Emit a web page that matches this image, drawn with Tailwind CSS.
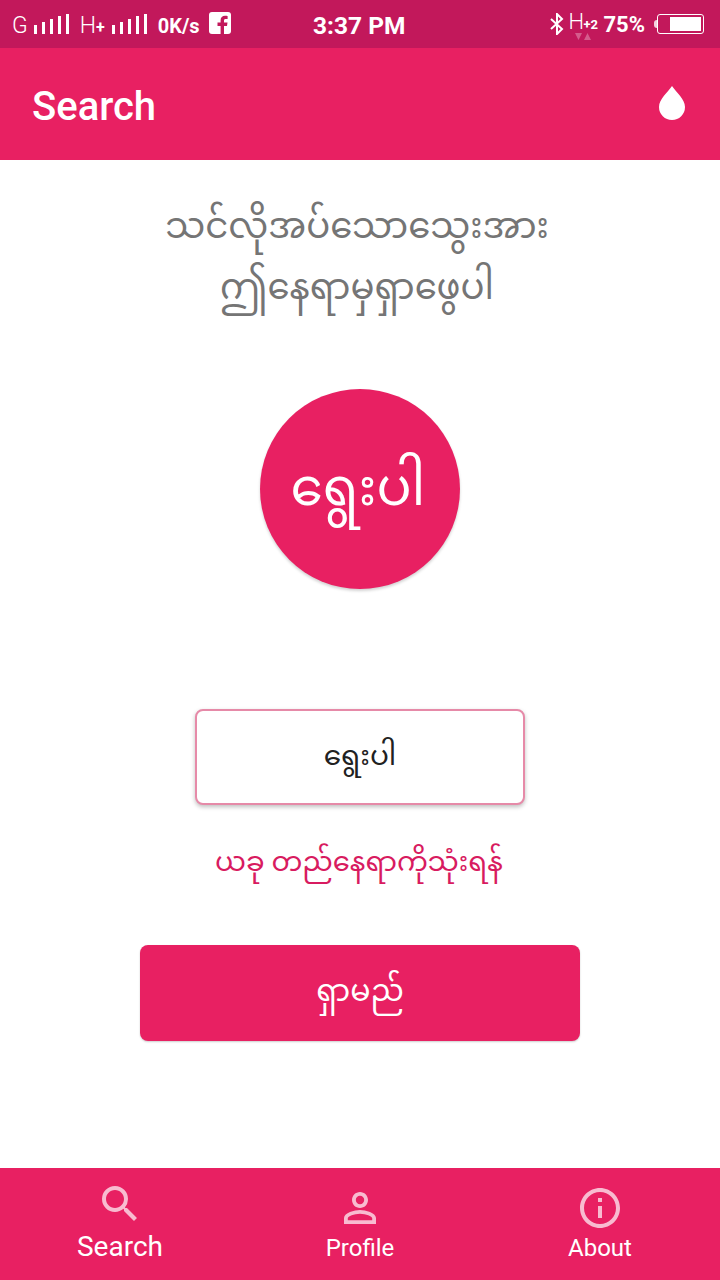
<!DOCTYPE html>
<html lang="my">
<head>
    <meta charset="UTF-8">
    <meta name="viewport" content="width=device-width, initial-scale=1.0">
    <title>Search</title>
    <script src="https://cdn.jsdelivr.net/npm/@tailwindcss/browser@4"></script>
</head>
<body class="w-[720px] h-[1280px] overflow-hidden bg-white flex flex-col font-['Roboto','Noto_Sans_Myanmar','Padauk','Noto_Sans',sans-serif]">
    <!-- Status bar -->
    <div class="h-[48px] shrink-0 bg-[#c2185b] text-white flex items-center relative">
        <div class="flex items-center pl-[12px] gap-[5px]">
            <span class="text-[23px] font-light leading-none mt-[3px]">G</span>
            <svg width="38" height="24" viewBox="0 0 38 24" fill="white"><rect x="1" y="13" width="3" height="9"/><rect x="9" y="10" width="3" height="12"/><rect x="17" y="7" width="3" height="15"/><rect x="25" y="4" width="3" height="18"/><rect x="33" y="2" width="3" height="20"/></svg>
            <span class="text-[23px] font-light leading-none ml-[4px] mt-[3px]">H<span class="text-[16px] font-bold">+</span></span>
            <svg class="ml-[1px]" width="38" height="24" viewBox="0 0 38 24" fill="white"><rect x="1" y="13" width="3" height="9"/><rect x="9" y="10" width="3" height="12"/><rect x="17" y="7" width="3" height="15"/><rect x="25" y="4" width="3" height="18"/><rect x="33" y="2" width="3" height="20"/></svg>
            <span class="text-[20px] font-bold leading-none ml-[4px] mt-[3px]">0K/s</span>
            <svg class="ml-[4px] -mt-[3px]" width="22" height="22" viewBox="0 0 22 22"><rect width="22" height="22" rx="3" fill="white"/><path d="M15 22v-8h3l.5-3.4H15V8.6c0-1 .4-1.7 1.8-1.7h1.8V3.900c-.4 0-1.400-.2-2.600-.2-2.600 0-4.400 1.600-4.400 4.500v2.400H8.500V14h3.100v8z" fill="#c2185b"/></svg>
        </div>
        <span class="absolute left-[313px] top-[11px] text-[24.500px] leading-[29px] font-bold">3:37 PM</span>
        <div class="ml-auto flex items-center pr-[16px]">
            <svg width="16" height="22" viewBox="0 0 16 22" fill="none" stroke="white" stroke-width="2"><path d="M2 6l11 10-5 5V1l5 5L2 16"/></svg>
            <div class="relative ml-[3px] w-[28px] h-[30px]">
                <span class="absolute left-0 top-0 text-[22px] font-light leading-[26px]">H</span>
                <span class="absolute left-[15px] top-[6px] text-[13px] font-bold leading-[20px]">+2</span>
                <svg class="absolute left-[7px] top-[24px]" width="16" height="7" viewBox="0 0 16 7" fill="white" fill-opacity="0.3"><path d="M0 0h7L3.500 7zM9 7h7l-3.500-7z"/></svg>
            </div>
            <span class="ml-[7px] text-[22px] font-bold leading-none mt-[2px]">75%</span>
            <div class="ml-[9px] w-[3px] h-[8px] bg-white/80 rounded-l-sm"></div>
            <div class="w-[47px] h-[20px] border border-white rounded-[3px] flex justify-end p-[2px]"><div class="w-[31px] bg-white"></div></div>
        </div>
    </div>

    <!-- App bar -->
    <header class="h-[112px] shrink-0 bg-[#e82062] text-white flex items-center justify-between pl-[32px] pr-[35px]">
        <h1 class="text-[40px] font-medium leading-none mt-[6px]">Search</h1>
        <svg class="-mt-[2px]" width="26" height="34" viewBox="0 0 26 34" fill="white"><path d="M13 0C9 6 0 13 0 21a13 13 0 0 0 26 0C26 13 17 6 13 0z"/></svg>
    </header>

    <!-- Main -->
    <main class="flex-1 flex flex-col items-center">
        <p class="mt-[36px] text-[35.500px] leading-[61px] text-[#757575] text-center -ml-[6px]">သင်လိုအပ်သောသွေးအား<br>ဤနေရာမှရှာဖွေပါ</p>
        <button class="mt-[71px] w-[200px] h-[200px] rounded-full bg-[#e82062] text-white text-[52px] flex items-center justify-center pb-[2px] pr-[4px] shadow-[0_2px_3px_rgba(0,0,0,0.18)]">ရွေးပါ</button>
        <button class="mt-[120px] w-[330px] h-[96px] rounded-[8px] bg-white border-2 border-[#e68aa8] text-[#212121] text-[28px] pb-[3px] shadow-[0_2px_4px_rgba(0,0,0,0.25)]">ရွေးပါ</button>
        <p class="mt-[29px] text-[27.500px] leading-[56px] text-[#d81b60] -ml-[2px]">ယခု တည်နေရာကိုသုံးရန်</p>
        <button class="mt-[55px] w-[440px] h-[96px] rounded-[8px] bg-[#e82062] text-white text-[30px] pb-[6px] shadow-[0_1px_2px_rgba(0,0,0,0.2)]">ရှာမည်</button>
    </main>

    <!-- Bottom nav -->
    <nav class="h-[112px] shrink-0 bg-[#e82062] grid grid-cols-3 text-white">
        <div class="flex flex-col items-center pt-[12px]">
            <svg width="48" height="48" viewBox="0 0 24 24" fill="#f8bbd0"><path d="M15.500 14h-.79l-.28-.27A6.470 6.470 0 0 0 16 9.500 6.500 6.500 0 1 0 9.500 16c1.610 0 3.090-.59 4.230-1.570l.27.28v.79l5 4.990L20.490 19l-4.990-5zm-6 0C7.010 14 5 11.990 5 9.500S7.010 5 9.500 5 14 7.010 14 9.500 11.990 14 9.500 14z"/></svg>
            <span class="text-[28px] leading-[32px] mt-[3px]">Search</span>
        </div>
        <div class="flex flex-col items-center pt-[16px]">
            <svg width="48" height="48" viewBox="0 0 24 24" fill="#f8bbd0"><path d="M12 5.900a2.100 2.100 0 1 1 0 4.200 2.100 2.100 0 0 1 0-4.200m0 9c2.970 0 6.100 1.460 6.100 2.100v1.100H5.900V17c0-.64 3.130-2.100 6.100-2.100M12 4C9.790 4 8 5.790 8 8s1.790 4 4 4 4-1.790 4-4-1.790-4-4-4zm0 9c-2.670 0-8 1.340-8 4v3h16v-3c0-2.660-5.330-4-8-4z"/></svg>
            <span class="text-[24px] leading-[28px] mt-[2px]">Profile</span>
        </div>
        <div class="flex flex-col items-center pt-[16px]">
            <svg width="48" height="48" viewBox="0 0 24 24" fill="#f8bbd0"><path d="M11 7h2v2h-2zm0 4h2v6h-2zm1-9C6.480 2 2 6.480 2 12s4.480 10 10 10 10-4.480 10-10S17.520 2 12 2zm0 18c-4.410 0-8-3.590-8-8s3.590-8 8-8 8 3.590 8 8-3.590 8-8 8z"/></svg>
            <span class="text-[24px] leading-[28px] mt-[2px]">About</span>
        </div>
    </nav>
</body>
</html>
